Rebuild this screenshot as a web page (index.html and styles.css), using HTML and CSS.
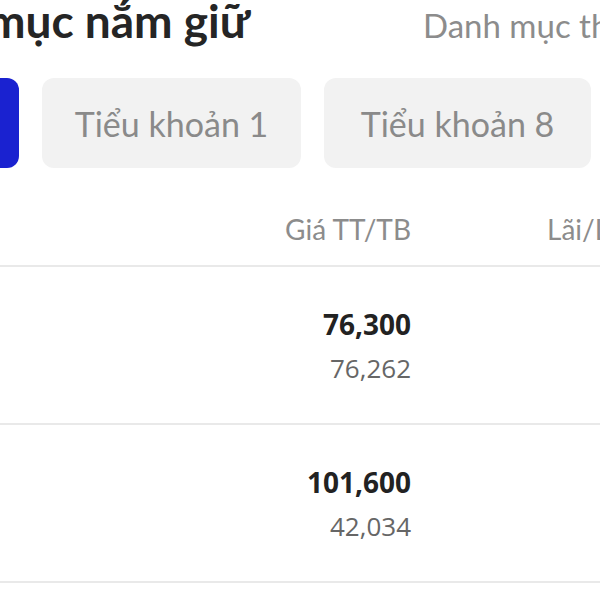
FILE: index.html
```html
<!DOCTYPE html>
<html lang="vi">
<head>
    <meta charset="UTF-8">
    <meta name="viewport" content="width=device-width, initial-scale=1.0">
    <title>Danh mục nắm giữ</title>
    <link rel="stylesheet" href="styles.css">
</head>
<body>
    <header class="top-bar">
        <h1 class="title">mục nắm giữ</h1>
        <span class="title-other">Danh mục theo dõi</span>
    </header>

    <div class="tabs">
        <button class="tab active">Tất cả</button>
        <button class="tab tab-1">Tiểu khoản 1</button>
        <button class="tab tab-8">Tiểu khoản 8</button>
    </div>

    <div class="holdings">
        <div class="row head">
            <div class="col-price">Giá TT/TB</div>
            <div class="col-pnl">Lãi/Lỗ</div>
        </div>
        <div class="row">
            <div class="col-price">
                <div class="price-now">76,300</div>
                <div class="price-avg">76,262</div>
            </div>
            <div class="col-pnl"></div>
        </div>
        <div class="row">
            <div class="col-price">
                <div class="price-now">101,600</div>
                <div class="price-avg">42,034</div>
            </div>
            <div class="col-pnl"></div>
        </div>
    </div>
</body>
</html>
```

FILE: styles.css
```css
body {
    margin: 0;
    padding: 0;
    width: 600px;
    height: 600px;
    overflow: hidden;
    background-color: #ffffff;
    font-family: Lato, "Noto Sans", sans-serif;
    color: #222222;
}

.top-bar {
    display: flex;
    align-items: baseline;
    height: 56px;
    white-space: nowrap;
}

.title {
    flex: none;
    width: 436px;
    margin: 0 0 0 -13px;
    font-size: 46px;
    font-weight: 700;
    line-height: 42px;
    color: #252525;
}

.title-other {
    flex: none;
    font-size: 33px;
    color: #8c8c8c;
}

.tabs {
    display: flex;
    gap: 23px;
    margin-top: 22px;
    margin-left: -181px;
}

.tab {
    flex: none;
    height: 90px;
    padding: 0;
    border: none;
    border-radius: 12px;
    background-color: #f2f2f2;
    color: #8a8a8a;
    font-family: inherit;
    font-size: 34px;
    white-space: nowrap;
}

.tab.active {
    width: 200px;
    background-color: #1a22d0;
    color: #ffffff;
}

.tab-1 {
    width: 259px;
}

.tab-8 {
    width: 267px;
}

.holdings {
    width: 780px;
}

.row {
    display: grid;
    grid-template-columns: 411px 1fr;
    height: 156px;
    border-bottom: 2px solid #e9e9e9;
}

.row.head {
    box-sizing: border-box;
    height: 99px;
    padding-top: 44px;
    color: #8c8c8c;
    font-size: 28px;
}

.col-price {
    text-align: right;
}

.col-pnl {
    padding-left: 136px;
}

.row .col-price {
    padding-top: 38px;
}

.row.head .col-price {
    padding-top: 0;
}

.price-now {
    font-family: "Open Sans", sans-serif;
    font-size: 28px;
    font-weight: 700;
    line-height: 38px;
    color: #222222;
}

.price-avg {
    font-family: "Open Sans", sans-serif;
    font-size: 26px;
    line-height: 50px;
    color: #666666;
}
```
